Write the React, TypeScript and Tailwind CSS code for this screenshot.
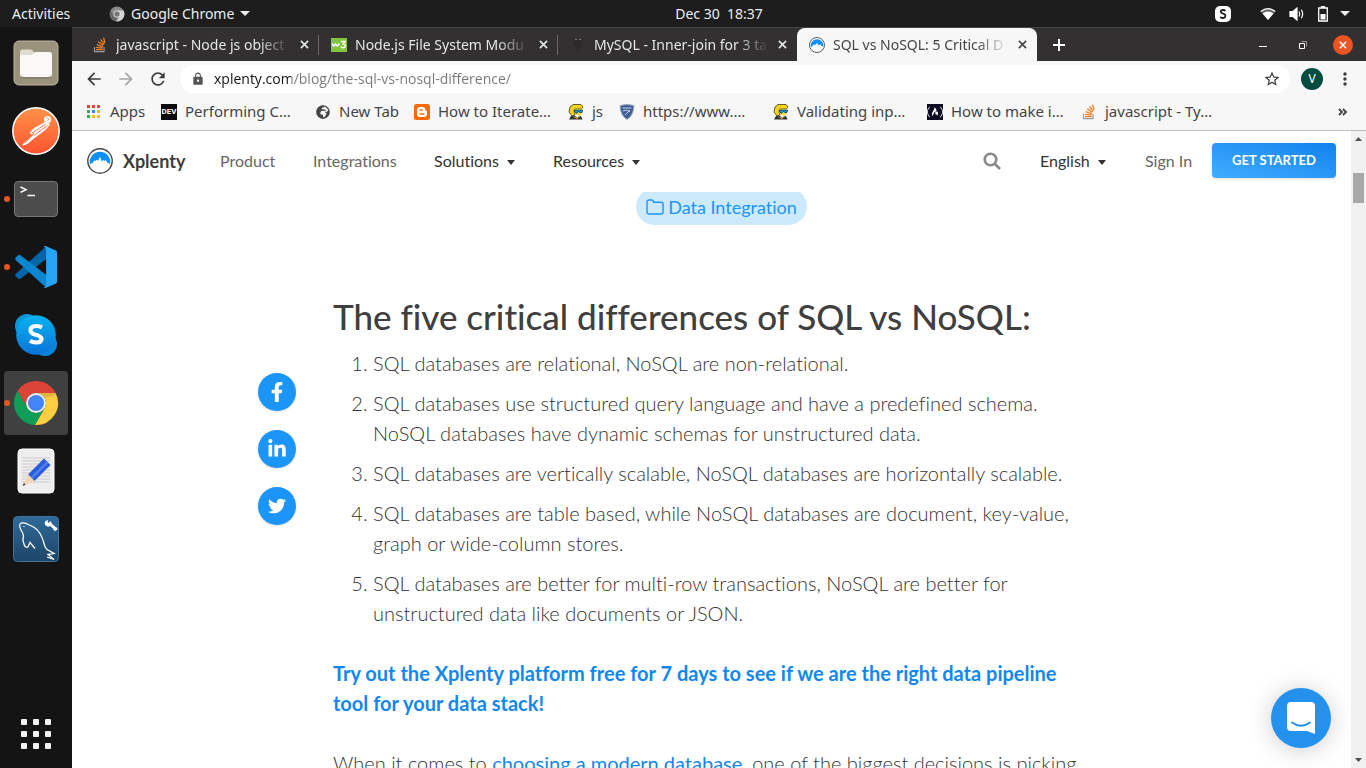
import type { ReactNode } from "react";
import { FaFacebookF, FaLinkedinIn, FaTwitter, FaFreeCodeCamp, FaGlobeAfrica } from "react-icons/fa";
import { MdArrowBack, MdArrowForward, MdRefresh, MdLock, MdStarBorder, MdMoreVert } from "react-icons/md";

function StackIcon() {
  return (
    <svg viewBox="0 0 16 16" className="size-4 shrink-0" fill="none">
      <path d="M2.5 10v4.7h9.5V10" stroke="#9b9b9b" strokeWidth="1.2" />
      <path d="M4 12.6h6.6M4.1 10.3l6.4.8M4.8 7.6l6 2.2M6.2 4.8l5.1 3.6M8.6 2.4l3.6 5M11.6.6l1.3 5.4" stroke="#f48024" strokeWidth="1.3" />
    </svg>
  );
}

function MountainIcon({ className }: { className: string }) {
  return (
    <svg viewBox="0 0 26 26" className={className}>
      <circle cx="13" cy="13" r="12.2" fill="#fff" stroke="#444" strokeWidth="1.4" />
      <path d="M3 16.500A10.300 10.300 0 1 1 23 16.500l-1.200-1.800-1.400.4-1.600-3-1.300 1-1.500-1-1.400 1.400L13 8.800l-1.800 4-1.500-1-1.300 1.300-1.200-.6-1.800 3-1.200-.4z" fill="#0f90f9" />
    </svg>
  );
}

function ChromeIcon() {
  return (
    <svg viewBox="0 0 48 48" className="size-12">
      <path d="M43.6 14A22 22 0 0 0 5.54 12.03L15.34 29A10 10 0 0 1 24 14Z" fill="#db4437" />
      <path d="M43.6 14A22 22 0 0 1 22.86 45.97L32.66 29A10 10 0 0 0 24 14Z" fill="#ffcd40" />
      <path d="M22.86 45.97A22 22 0 0 1 5.54 12.03L15.34 29A10 10 0 0 0 32.66 29Z" fill="#0f9d58" />
      <path d="M24 14H43.6l.6 1.6L32 19z" fill="#a8892e" opacity=".35" />
      <circle cx="24" cy="24" r="10" fill="#f1f1f1" />
      <circle cx="24" cy="24" r="8" fill="#4285f4" />
    </svg>
  );
}

function GreyChromeIcon() {
  return (
    <svg viewBox="0 0 16 16" className="size-4">
      <circle cx="8" cy="8" r="7.4" fill="#8b8b8b" />
      <path d="M8 4.5h6.5A7.4 7.4 0 0 1 7.4 15.4L11 9.8 8 4.5z" fill="#d2d2d2" />
      <path d="M1.8 4.2 5 9.8l3 1.8-1 3.7A7.4 7.4 0 0 1 1.8 4.2z" fill="#686868" />
      <circle cx="8" cy="8" r="3.5" fill="#ececec" />
      <circle cx="8" cy="8" r="2.7" fill="#777" />
    </svg>
  );
}

function FilesIcon() {
  return (
    <svg viewBox="0 0 48 48" className="size-12">
      <rect x="2" y="2" width="44" height="44" rx="5" fill="#9a927c" stroke="#bab39f" />
      <path d="M8 13q0-2.500 2.500-2.500h8q1.500 0 2.500 1.500l1 1.500h8v8H8z" fill="#e0dccd" />
      <path d="M8 18q0-2 2-2h9q1.500 0 2.500-1.500t2.500-1.500h13.500q2.500 0 2.500 2.500v19.500q0 3-3 3H11q-3 0-3-3z" fill="#faf9f7" />
      <path d="M9 37.500q1 1.500 3 1.500h24q2 0 3-1.500" fill="none" stroke="#777160" />
    </svg>
  );
}

function PostmanDockIcon() {
  return (
    <svg viewBox="0 0 48 48" className="size-12">
      <defs>
        <linearGradient id="postman" x1="0" y1="0" x2="0" y2="1">
          <stop stopColor="#ff9248" />
          <stop offset="1" stopColor="#ff5331" />
        </linearGradient>
      </defs>
      <circle cx="24" cy="24" r="23.200" fill="url(#postman)" stroke="#fff" strokeWidth="1.500" />
      <circle cx="35.500" cy="12.500" r="3.600" fill="#fff" />
      <path d="m34 10.500 3 1.500-1.500 2" stroke="#ff8a55" strokeWidth=".8" fill="none" />
      <path d="M33 15 22 21l-4 4 .5 2 3 .5-7 6-4 4 .5 1.500 5-2.500 6-5 4-3 8-6 4-5-2-2z" fill="#fff" />
      <path d="M33.500 17 21 25.500M35.500 18.500 22 28.500M22 26.500l-9 9.500M19 24.500l3 2" stroke="#ff6e3d" strokeWidth=".9" />
    </svg>
  );
}

function TerminalIcon() {
  return (
    <svg viewBox="0 0 48 48" className="size-12" fill="none">
      <rect x="2.500" y="6.500" width="43" height="35" rx="3.500" fill="#4c4c4c" stroke="#777" />
      <path d="M8.500 12l5.500 2.700-5.500 2.700M15.500 20.500h7.500" stroke="#fff" strokeWidth="1.500" />
    </svg>
  );
}

function CodeIcon() {
  return (
    <svg viewBox="0 0 48 48" className="size-12">
      <path d="M34 3.500 3.600 31q-1 1.200 0 2.300l2.600 2.500q1 .8 2.200 0L35 15.500z" fill="#0065a9" />
      <path d="M34 44.500 3.600 17q-1-1.200 0-2.300l2.600-2.500q1-.8 2.200 0L35 32.500z" fill="#0a86d3" />
      <path d="M33.500 3 44 7.500q1 .7 1 2v29q0 1.500-1 2L33.500 45q-1.200.2-2-.5 2.600 0 2.600-2.500V6.500Q34 4 31.500 3.500q1-.8 2-.5z" fill="#26a3f3" />
    </svg>
  );
}

function SkypeDockIcon() {
  return (
    <svg viewBox="0 0 48 48" className="size-12">
      <defs>
        <linearGradient id="skype" x1="0" y1="0" x2="0" y2="1">
          <stop stopColor="#08b3f2" />
          <stop offset="1" stopColor="#0a73d8" />
        </linearGradient>
      </defs>
      <circle cx="15" cy="15" r="12" fill="#0798dc" />
      <circle cx="33" cy="33" r="12" fill="#0a84dc" />
      <circle cx="24" cy="24" r="19.800" fill="url(#skype)" />
      <path d="M30 16.300q-2.500-1.300-5.500-1.300-6 0-6 4.300 0 3.200 5 4.400 6 1.300 6 4.400 0 3.400-5.500 3.400-3.500 0-6-1.700" fill="none" stroke="#fff" strokeWidth="4.200" />
    </svg>
  );
}

function EditorIcon() {
  return (
    <svg viewBox="0 0 48 48" className="size-12">
      <rect x="6" y="2" width="36" height="44" rx="4" fill="#eee" stroke="#fff" />
      <path d="M10 11h28M10 14h28M10 17h28M10 20h28M10 23h28M10 26h28M10 29h28M10 32h28M10 35h28" stroke="#c9c9c9" />
      <path d="M32 11.500 16 27.500l6.500 6.500 16-16z" fill="#2b5cd8" />
      <path d="M34.500 14 18.500 30l2 2 16-16z" fill="#4b7cf0" />
      <path d="M16 27.500 10.500 39l12-5z" fill="#f5d4b3" />
      <path d="m12 36-1.500 3 3-1.200z" fill="#333" />
    </svg>
  );
}

function WorkbenchIcon() {
  return (
    <svg viewBox="0 0 48 48" className="size-12" fill="none">
      <defs>
        <linearGradient id="bench" x1="0" y1="0" x2="0" y2="1">
          <stop stopColor="#2f6a9b" />
          <stop offset="1" stopColor="#1d4567" />
        </linearGradient>
      </defs>
      <rect x="1.500" y="1.500" width="45" height="45" rx="4" fill="url(#bench)" stroke="#41749c" />
      <path d="M16 32q-3 1-4-3-2-4-.5-8-.5-3-2.500-6-3-6 .5-7 4-.8 6.500 1.500 8 2.500 12 9 3 5 4 10 .8 4 3 6l7 4-6 1 6 5-7-2.500" stroke="#fff" strokeWidth="1.300" />
      <path d="m16 32 2-4.500 5 6M11.500 11.500h1" stroke="#fff" strokeWidth="1.200" />
      <path d="m37 8 6 5.500" stroke="#fff" strokeWidth="3" />
      <path d="M33 6.500q-1 3 1.500 4.500t4-.5T39 6l-2 2-1.500-1 .5-2.200zM42 11.500q3 0 3.500 3L43 16q-2-1-2-3z" fill="#fff" />
    </svg>
  );
}

function FaceIcon() {
  return (
    <svg viewBox="0 0 16 16" className="size-4 shrink-0">
      <path d="M1 8 2 3 5 .5h8L15 3l-1 1.500H7L6 8l1 3-3 1z" fill="#f6d21f" stroke="#443c12" strokeWidth=".8" />
      <path d="M6.500 4.500H14L14 9l-2 3-4-1-2-3z" fill="#f9dc4a" />
      <path d="M6 6h8.500L14 8.500h-2L10.500 7.500 9 9.300 7 8.500z" fill="#2093c9" stroke="#173b50" strokeWidth=".8" />
      <path d="m1 15.500 2-3.500 3-.5 3 1.800 4-1.300 1.500 3.500z" fill="#333" />
      <path d="m4 12 4 1.500 3-.5-2 2z" fill="#f1c232" />
    </svg>
  );
}

function ShieldIcon() {
  return (
    <svg viewBox="0 0 16 16" className="size-4 shrink-0">
      <path d="M1 1.500q7-2 14 0-.3 10-7 14-6.700-4-7-14z" fill="#3f5e95" stroke="#9eabc5" />
      <path d="M3.500 4h9M4 7l4-1 3 2M6 11l5-5" stroke="#dae1ee" strokeWidth=".9" fill="none" />
    </svg>
  );
}

function W3Icon() {
  return (
    <svg viewBox="0 0 16 14" className="h-3.5 w-4 shrink-0" fill="none">
      <rect width="16" height="14" fill="#83c441" />
      <path d="M1 5.500 2.800 8 4.500 6l1.800 2L8.500 5.500M10 3.500h4L12.300 6q2 0 2 1.800t-2.300 2q-1.700 0-2-1.500" stroke="#fff" strokeWidth="1.400" />
    </svg>
  );
}

function AppsIcon() {
  const colors = ["#ea4335", "#ea4335", "#ea4335", "#34a853", "#4285f4", "#fbbc05", "#34a853", "#fbbc05", "#fbbc05"];
  return (
    <svg viewBox="0 0 16 16" className="size-4 shrink-0">
      {colors.map((c, i) => (
        <rect key={i} x={1 + (i % 3) * 5} y={1 + Math.floor(i / 3) * 5} width="3" height="3" fill={c} />
      ))}
    </svg>
  );
}

function BloggerIcon() {
  return (
    <svg viewBox="0 0 16 16" className="size-4 shrink-0" fill="none">
      <rect width="16" height="16" rx="2.500" fill="#ff6a00" />
      <path d="M3 6q0-3 3-3h2.500q2.800 0 2.800 2.800 0 1.200 1.700 1.200v3q0 3-3 3H6q-3 0-3-3z" fill="#fff" />
      <path d="M6 6h2.300M6 10h4" stroke="#ff6a00" strokeWidth="1.300" strokeLinecap="round" />
    </svg>
  );
}

function GithubFaintIcon() {
  return (
    <svg viewBox="0 0 16 16" className="size-4 shrink-0" fill="none">
      <path d="M4 8q-1-3 1-5h6q2 2 1 5l-2 2v4H6v-4z" fill="#2b292a" />
      <path d="M5 2.500h2M9 2.500h2" stroke="#777" />
    </svg>
  );
}

function Caret({ className }: { className: string }) {
  return (
    <svg viewBox="0 0 10 5" className={className} fill="currentColor" preserveAspectRatio="none">
      <path d="M0 0h10L5 5z" />
    </svg>
  );
}

function Cross({ className }: { className: string }) {
  return (
    <svg viewBox="0 0 10 10" className={className} stroke="currentColor" strokeWidth="1.800">
      <path d="m1 1 8 8M9 1 1 9" />
    </svg>
  );
}

type Tab = { title: string; icon: ReactNode; active?: boolean; line?: boolean };
const tabs: Tab[] = [
  { title: "javascript - Node js object", icon: <StackIcon />, line: true },
  { title: "Node.js File System Modu", icon: <W3Icon />, line: true },
  { title: "MySQL - Inner-join for 3 ta", icon: <GithubFaintIcon /> },
  { title: "SQL vs NoSQL: 5 Critical D", icon: <MountainIcon className="size-4 shrink-0" />, active: true },
];

const devBadge = (
  <span className="flex size-4 shrink-0 items-center justify-center bg-[#0a0a0a] font-['Roboto'] text-[8px] font-bold text-white">DEV</span>
);

const bookmarks: { title: string; icon: ReactNode; width: string }[] = [
  { title: "Apps", icon: <AppsIcon />, width: "w-[75px]" },
  { title: "Performing C…", icon: devBadge, width: "w-[154px]" },
  { title: "New Tab", icon: <FaGlobeAfrica className="size-4 shrink-0 p-px text-[#444]" />, width: "w-[99px]" },
  { title: "How to Iterate…", icon: <BloggerIcon />, width: "w-[154px]" },
  { title: "js", icon: <FaceIcon />, width: "w-[51px]" },
  { title: "https://www.…", icon: <ShieldIcon />, width: "w-[154px]" },
  { title: "Validating inp…", icon: <FaceIcon />, width: "w-[154px]" },
  { title: "How to make i…", icon: <FaFreeCodeCamp className="size-4 shrink-0 bg-[#0a0a23] text-white" />, width: "w-[154px]" },
  { title: "javascript - Ty…", icon: <StackIcon />, width: "w-[154px]" },
];

const dock: { name: string; icon: ReactNode; running?: boolean; active?: boolean }[] = [
  { name: "Files", icon: <FilesIcon /> },
  { name: "Postman", icon: <PostmanDockIcon /> },
  { name: "Terminal", icon: <TerminalIcon />, running: true },
  { name: "Visual Studio Code", icon: <CodeIcon />, running: true },
  { name: "Skype", icon: <SkypeDockIcon /> },
  { name: "Google Chrome", icon: <ChromeIcon />, running: true, active: true },
  { name: "Text Editor", icon: <EditorIcon /> },
  { name: "MySQL Workbench", icon: <WorkbenchIcon /> },
];

function TopBar() {
  return (
    <div className="grid h-[27px] shrink-0 grid-cols-[1fr_auto_1fr] items-center bg-[#1d1d1d] text-sm text-[#ededed]">
      <div className="flex items-center pl-3">
        <button className="w-[97px] text-left">Activities</button>
        <button className="flex items-center gap-1.5">
          <GreyChromeIcon />
          Google Chrome
          <Caret className="h-[5px] w-[10px]" />
        </button>
      </div>
      <button className="pl-[72px] whitespace-pre">Dec 30  18:37</button>
      <div className="flex items-center justify-end pr-4">
        <svg viewBox="0 0 16 16" className="mr-[29px] size-4">
          <rect width="16" height="16" rx="5" fill="#fff" />
          <path d="M10.500 5Q9.600 4 8 4 5.800 4 5.800 5.800 5.800 7.200 8 7.600q2.400.5 2.400 2.200Q10.400 12 8 12q-1.800 0-2.800-1.200" fill="none" stroke="#222" strokeWidth="1.800" />
        </svg>
        <svg viewBox="0 0 16 14" className="mr-[13px] h-3.5 w-4">
          <path d="M8 13 .5 4.300Q8-1.700 15.500 4.300z" fill="#666" />
          <path d="M8 13 2.500 6.500q5.500-4 11 0z" fill="#fff" />
          <path d="M.8 4.500Q8-1.200 15.200 4.500" fill="none" stroke="#fff" strokeWidth="1.300" />
        </svg>
        <svg viewBox="0 0 16 14" className="mr-[13px] h-3.5 w-4" fill="none" stroke="#fff" strokeWidth="1.200">
          <path d="M1 4.500h3l4-3.500v12L4 9.500H1z" fill="#fff" />
          <path d="M10 4.500q1.500 2.500 0 5M12.300 2.800q2.700 4.200 0 8.400" />
        </svg>
        <svg viewBox="0 0 10 16" className="mr-3 h-4 w-2.5" fill="none">
          <path d="M3.500 1.500V.5h3v1M.7 2h8.600v13H.7z" stroke="#fff" strokeWidth="1.300" />
          <path d="M2.500 8h5v5.500h-5z" fill="#fff" />
        </svg>
        <Caret className="h-[5px] w-[10px]" />
      </div>
    </div>
  );
}

function Dock() {
  return (
    <nav aria-label="Dock" className="flex w-[72px] shrink-0 flex-col items-center gap-1 bg-[#141414] pt-1">
      {dock.map((d) => (
        <button
          key={d.name}
          aria-label={d.name}
          className={`relative flex size-16 items-center justify-center rounded ${d.active ? "bg-[#404040]" : ""}`}
        >
          {d.running && <span className="absolute left-0 size-1.5 rounded-full bg-[#e95420]" />}
          {d.icon}
        </button>
      ))}
      <button aria-label="Show Applications" className="mt-auto mb-[19px] grid grid-cols-3 gap-1.5">
        {[0, 1, 2, 3, 4, 5, 6, 7, 8].map((n) => (
          <span key={n} className="size-1.5 rounded-[1px] bg-[#f3f1f0]" />
        ))}
      </button>
    </nav>
  );
}

function TabStrip() {
  return (
    <div className="flex h-[34px] shrink-0 items-stretch border-t border-[#464445] bg-[#323031] pl-2 text-sm">
      {tabs.map((t) => (
        <div
          key={t.title}
          className={`relative flex items-center pr-2.5 pl-3 ${t.active ? "w-[240px] rounded-t-lg bg-[#f7f7f7] text-[#444]" : "w-[239px] text-[#e6e6e6]"}`}
        >
          {t.icon}
          <span className="ml-2 min-w-0 flex-1 whitespace-nowrap [mask-image:linear-gradient(to_right,black_82%,transparent)]">
            {t.title}
          </span>
          <button aria-label="Close tab" className="ml-2.5">
            <Cross className="size-[9px]" />
          </button>
          {t.line && <span className="absolute right-0 h-5 w-px bg-[#6a6869]" />}
        </div>
      ))}
      <button aria-label="New tab" className="ml-4 text-white">
        <svg viewBox="0 0 12 12" className="size-3" stroke="currentColor" strokeWidth="2">
          <path d="M6 0v12M0 6h12" />
        </svg>
      </button>
      <div className="ml-auto flex items-center pr-[13px] text-white">
        <button aria-label="Minimize" className="mt-1 h-px w-2 bg-white" />
        <button aria-label="Restore" className="ml-8">
          <svg viewBox="0 0 8 8" className="size-2" fill="none" stroke="currentColor">
            <path d="M.5 2.500h5v5h-5z" strokeWidth="1" />
            <path d="M2.500.5h5v5" stroke="#999" />
          </svg>
        </button>
        <button aria-label="Close" className="ml-[26px] flex size-5 items-center justify-center rounded-full bg-[#e95420]">
          <Cross className="size-2" />
        </button>
      </div>
    </div>
  );
}

function Toolbar() {
  return (
    <div className="flex h-9 shrink-0 items-center bg-[#f7f7f7] pr-[11px] pl-3 text-[#3c3c3c]">
      <button aria-label="Back"><MdArrowBack className="size-5" /></button>
      <button aria-label="Forward" className="ml-3 text-[#a5a5a5]"><MdArrowForward className="size-5" /></button>
      <button aria-label="Reload" className="ml-3"><MdRefresh className="size-5" /></button>
      <div className="ml-3 flex h-7 flex-1 items-center rounded-full bg-white pr-[9px] pl-[11px]">
        <MdLock className="size-3.5 text-[#555]" />
        <input
          aria-label="Address"
          className="ml-[9px] min-w-0 flex-1 bg-[linear-gradient(to_right,#111_77px,#777_77px)] bg-clip-text font-['Open_Sans',sans-serif] text-sm text-transparent outline-none"
          defaultValue="xplenty.com/blog/the-sql-vs-nosql-difference/"
        />
        <button aria-label="Bookmark this page"><MdStarBorder className="size-[18px]" /></button>
      </div>
      <button className="ml-[11px] flex size-[22px] items-center justify-center rounded-full bg-[#004d40] text-xs text-white">V</button>
      <button aria-label="Menu" className="ml-3"><MdMoreVert className="size-5" /></button>
    </div>
  );
}

function Bookmarks() {
  return (
    <div className="flex h-[34px] shrink-0 items-center border-b border-[#bdbdbd] bg-[#f7f7f7] pb-1 pl-3.5 text-[15px] text-[#444]">
      {bookmarks.map((b) => (
        <a key={b.title} href="#" className={`flex shrink-0 items-center gap-2 whitespace-nowrap ${b.width}`}>
          {b.icon}
          {b.title}
        </a>
      ))}
      <button aria-label="More bookmarks" className="mr-[18px] ml-auto">
        <svg viewBox="0 0 10 8" className="h-2 w-2.5" fill="none" stroke="currentColor" strokeWidth="1.800">
          <path d="m1 1 3 3-3 3M5 1l3 3-3 3" />
        </svg>
      </button>
    </div>
  );
}

function SiteHeader() {
  return (
    <header className="flex h-[61px] shrink-0 items-center bg-white px-[15px] pb-0.5 text-base text-[#333]">
      <a href="#" className="flex w-[133px] items-center gap-2.5 text-lg font-bold text-[#3c3c3c]">
        <MountainIcon className="size-[26px]" />
        Xplenty
      </a>
      <a href="#" className="w-[93px] text-[#666]">Product</a>
      <a href="#" className="w-[121px] text-[#666]">Integrations</a>
      <button className="flex w-[119px] items-center gap-2">Solutions<Caret className="mt-1 h-[5px] w-2" /></button>
      <button className="flex items-center gap-2">Resources<Caret className="mt-1 h-[5px] w-2" /></button>
      <button aria-label="Search" className="ml-auto text-[#8a8a8a]">
        <svg viewBox="0 0 18 18" className="size-[18px]" fill="none" stroke="currentColor" strokeWidth="2.600">
          <circle cx="7.500" cy="7.500" r="5.800" />
          <path d="m12 12 5 5" />
        </svg>
      </button>
      <button className="ml-[39px] flex w-[105px] items-center gap-2">English<Caret className="mt-1 h-[5px] w-2" /></button>
      <a href="#" className="w-[67px] text-[#666]">Sign In</a>
      <a
        href="#"
        className="flex h-[35px] w-[124px] items-center justify-center rounded bg-linear-to-tr from-[#40adff] to-[#0f82ee] text-[13px] font-bold text-white shadow-sm"
      >
        GET STARTED
      </a>
    </header>
  );
}

const points = [
  "SQL databases are relational, NoSQL are non-relational.",
  "SQL databases use structured query language and have a predefined schema. NoSQL databases have dynamic schemas for unstructured data.",
  "SQL databases are vertically scalable, NoSQL databases are horizontally scalable.",
  "SQL databases are table based, while NoSQL databases are document, key-value, graph or wide-column stores.",
  "SQL databases are better for multi-row transactions, NoSQL are better for unstructured data like documents or JSON.",
];

const shares = [
  { name: "Share on Facebook", icon: <FaFacebookF className="size-5" /> },
  { name: "Share on LinkedIn", icon: <FaLinkedinIn className="size-5" /> },
  { name: "Share on Twitter", icon: <FaTwitter className="size-[18px]" /> },
];

function Article() {
  return (
    <main className="grid min-h-0 flex-1 grid-cols-[1fr_777px_1fr] overflow-hidden bg-white pl-5">
      <aside className="flex flex-col items-end gap-[19px] pt-[181px] pr-[37px]">
        {shares.map((s) => (
          <a key={s.name} href="#" aria-label={s.name} className="flex size-[38px] items-center justify-center rounded-full bg-[#1b95f8] text-white shadow-sm">
            {s.icon}
          </a>
        ))}
      </aside>
      <article className="text-xl leading-[30px] font-light text-[#333]">
        <div className="-mt-1 flex justify-center">
          <a href="#" className="flex h-[37px] items-center gap-1 rounded-full bg-[#cdeafd] px-2.5 text-lg font-normal text-[#1b95f8]">
            <svg viewBox="0 0 18 16" className="h-4 w-[18px]" fill="none" stroke="currentColor" strokeWidth="1.400">
              <path d="M1 3q0-2 2-2h3q1 0 1.300 1l.4 1.200H15q2 0 2 2V13q0 2-2 2H3q-2 0-2-2z" />
            </svg>
            Data Integration
          </a>
        </div>
        <h1 className="mt-[71px] text-[35px] leading-10 font-medium text-[#3f3f3f]">The five critical differences of SQL vs NoSQL:</h1>
        <ol className="mt-3 flex list-decimal flex-col gap-2.5 pr-2 pl-10">
          {points.map((p) => (
            <li key={p}>{p}</li>
          ))}
        </ol>
        <p className="mt-[30px] pr-8 font-bold">
          <a href="#" className="text-[#1287ee]">
            Try out the Xplenty platform free for 7 days to see if we are the right data pipeline tool for your data stack!
          </a>
        </p>
        <p className="mt-[30px] pr-2">
          When it comes to <a href="#" className="font-normal text-[#1287ee]">choosing a modern database</a>, one of the biggest decisions is picking
        </p>
      </article>
    </main>
  );
}

function Scrollbar() {
  return (
    <div className="flex w-[15px] shrink-0 flex-col items-center bg-[#f1f1f1] py-1.5 text-[#505050]">
      <Caret className="h-1 w-[7px] rotate-180" />
      <div className="mt-8 h-[30px] w-[11px] bg-[#a8a8a8]" />
      <Caret className="mt-auto h-1 w-[7px]" />
    </div>
  );
}

export default function App() {
  return (
    <div className="flex h-screen flex-col overflow-hidden font-['Noto_Sans',sans-serif]">
      <TopBar />
      <div className="flex min-h-0 flex-1">
        <Dock />
        <div className="flex min-w-0 flex-1 flex-col">
          <TabStrip />
          <Toolbar />
          <Bookmarks />
          <div className="relative flex min-h-0 flex-1">
            <div className="flex min-w-0 flex-1 flex-col font-['Lato',sans-serif] [font-variant-ligatures:none]">
              <SiteHeader />
              <Article />
            </div>
            <Scrollbar />
            <button
              aria-label="Open chat"
              className="absolute right-[35px] bottom-5 flex size-[60px] items-center justify-center rounded-full bg-[#2491ed] shadow-[0_2px_24px_rgba(0,0,0,0.2)]"
            >
              <svg viewBox="0 0 28 32" className="h-8 w-7" fill="none">
                <path d="M4 0h20q4 0 4 4v28l-8-3H4q-4 0-4-4V4q0-4 4-4z" fill="#fff" />
                <path d="M5 20.500q9 6.500 18 0" stroke="#2491ed" strokeWidth="2" strokeLinecap="round" />
              </svg>
            </button>
          </div>
        </div>
      </div>
    </div>
  );
}
